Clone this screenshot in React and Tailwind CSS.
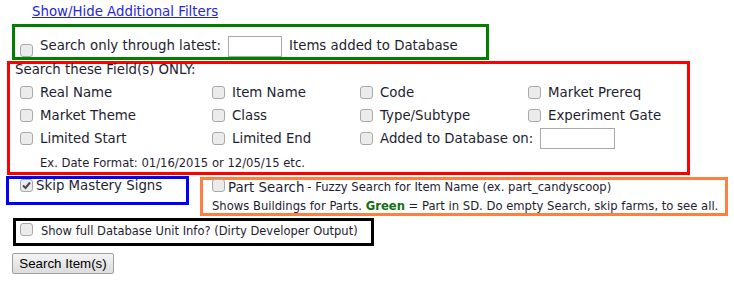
import React from "react";

const CB = ({ checked }) => (
  <span className="inline-flex h-[13px] w-[13px] shrink-0 items-center justify-center rounded-[3px] border border-[#a9a9a9] bg-[#ebebeb]">
    {checked && (
      <svg width="9" height="9" viewBox="0 0 9 9">
        <path d="M1 4.5 L3.5 7 L8 1.5" fill="none" stroke="#4a4a4a" strokeWidth="2" />
      </svg>
    )}
  </span>
);

const Field = ({ label }) => (
  <div className="flex h-[23px] items-center gap-[7px]">
    <CB />
    <span>{label}</span>
  </div>
);

export default function App() {
  return (
    <div
      className="h-[281px] w-[734px] bg-white text-[13.33px] leading-[16px] text-[#1e1e30]"
      style={{ fontFamily: '"DejaVu Sans", Verdana, sans-serif' }}
    >
      <div className="pl-[32px] pt-[4px]">
        <a href="#" className="text-[#2626e0] underline">Show/Hide Additional Filters</a>
      </div>

      <div className="ml-[12px] mt-[4px] flex h-[36px] w-[477px] items-end gap-[7px] border-[3px] border-[#008000] pl-[5px]">
        <CB />
        <span className="mb-[3px]">Search only through latest:</span>
        <span className="h-[21px] w-[54px] border border-[#a9a9a9] bg-white" />
        <span className="mb-[3px]">Items added to Database</span>
      </div>

      <div className="ml-[7px] mt-[1px] h-[114px] w-[683px] border-[3px] border-[#ff0000] pl-[5px]">
        <div className="-mt-[1px] leading-[14px]">Search these Field(s) ONLY:</div>
        <div className="mt-[4px] grid grid-cols-[192px_148px_168px_1fr] pl-[5px]">
          <Field label="Real Name" />
          <Field label="Item Name" />
          <Field label="Code" />
          <Field label="Market Prereq" />
          <Field label="Market Theme" />
          <Field label="Class" />
          <Field label="Type/Subtype" />
          <Field label="Experiment Gate" />
          <Field label="Limited Start" />
          <Field label="Limited End" />
          <div className="col-span-2 flex h-[23px] items-center gap-[7px]">
            <CB />
            <span>Added to Database on:</span>
            <span className="h-[21px] w-[75px] border border-[#a9a9a9] bg-white" />
          </div>
        </div>
        <div className="mt-[6px] pl-[25px] text-[11.6px] leading-[14px]">Ex. Date Format: 01/16/2015 or 12/05/15 etc.</div>
      </div>

      <div className="mt-[1px] flex items-start">
        <div className="ml-[6px] flex h-[29px] w-[183px] shrink-0 items-start gap-[3px] border-[3px] border-[#0000ff] pl-[11px]">
          <span className="-mt-[1px]"><CB checked /></span>
          <span className="-mt-[1px]">Skip Mastery Signs</span>
        </div>
        <div className="ml-[11px] mt-[1px] h-[39px] w-[528px] shrink-0 border-[3px] border-[#ff7f3f] pl-[9px]">
          <div className="flex items-center gap-[3px] leading-[15px]">
            <span className="-mt-[2px]"><CB /></span>
            <span>Part Search</span>
            <span className="text-[11.6px]"> - Fuzzy Search for Item Name (ex. part_candyscoop)</span>
          </div>
          <div className="mt-[4px] text-[11.6px] leading-[14px]">
            Shows Buildings for Parts. <b className="text-[#107010]">Green</b> = Part in SD. Do empty Search, skip farms, to see all.
          </div>
        </div>
      </div>

      <div className="ml-[13px] mt-[2px] flex h-[28px] w-[361px] items-start gap-[8px] border-[3px] border-black pl-[4px] pt-[2px] text-[11.5px] leading-[14px]">
        <CB />
        <span className="mt-[1px]">Show full Database Unit Info? (Dirty Developer Output)</span>
      </div>

      <button
        className="ml-[12px] mt-[7px] h-[21px] w-[102px] rounded-[2px] border border-[#a0a0a0] bg-gradient-to-b from-[#f4f4f4] to-[#dcdcdc] text-[13.33px] leading-[17px] text-black"
        style={{ fontFamily: '"Liberation Sans", Arial, sans-serif' }}
      >
        Search Item(s)
      </button>
    </div>
  );
}
